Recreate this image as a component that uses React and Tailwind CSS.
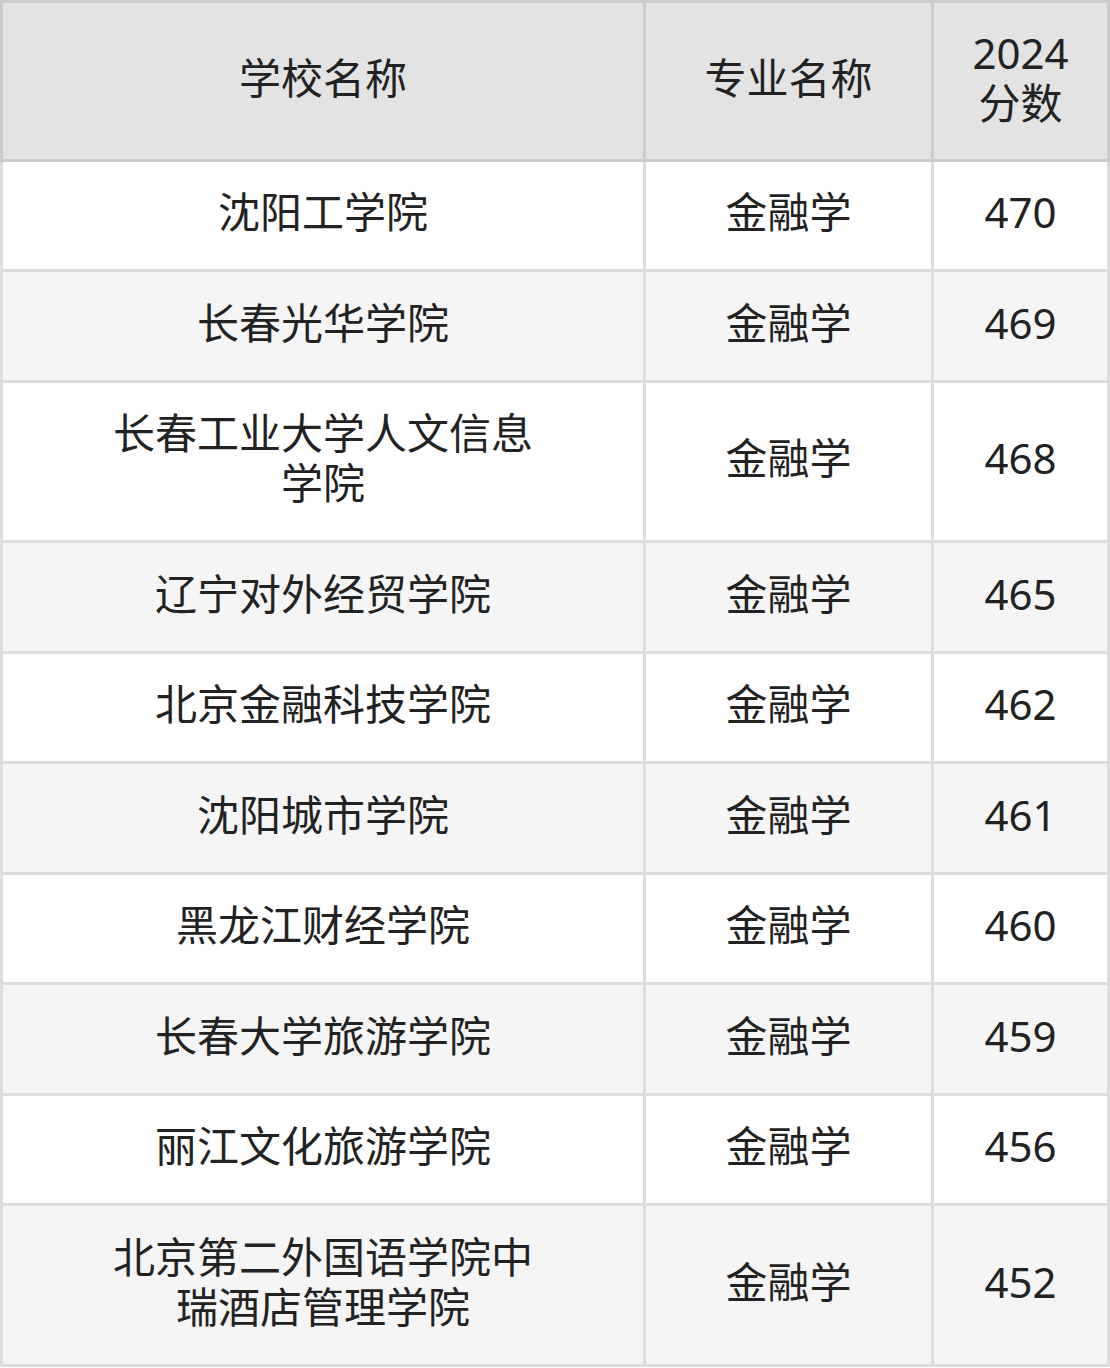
import React from 'react';

const rows = [
    { school: '沈阳工学院', major: '金融学', score: 470 },
    { school: '长春光华学院', major: '金融学', score: 469 },
    { school: '长春工业大学人文信息学院', major: '金融学', score: 468 },
    { school: '辽宁对外经贸学院', major: '金融学', score: 465 },
    { school: '北京金融科技学院', major: '金融学', score: 462 },
    { school: '沈阳城市学院', major: '金融学', score: 461 },
    { school: '黑龙江财经学院', major: '金融学', score: 460 },
    { school: '长春大学旅游学院', major: '金融学', score: 459 },
    { school: '丽江文化旅游学院', major: '金融学', score: 456 },
    { school: '北京第二外国语学院中瑞酒店管理学院', major: '金融学', score: 452 },
];

const App = () => {
    return (
        <div
            className="w-[1110px] bg-white text-[#222222]"
            style={{ fontFamily: '"Noto Sans", "Noto Sans CJK SC", sans-serif' }}
        >
            <table className="w-[1110px] table-fixed border-collapse text-[42px] leading-[50px]">
                <colgroup>
                    <col className="w-[643px]" />
                    <col className="w-[288px]" />
                    <col />
                </colgroup>
                <thead>
                    <tr className="bg-[#e3e3e3]">
                        <th className="border-[3px] border-[#cccccc] px-[100px] pt-[25px] pb-[30.5px] font-normal text-center">
                            学校名称
                        </th>
                        <th className="border-[3px] border-[#cccccc] px-[20px] pt-[25px] pb-[30.5px] font-normal text-center">
                            专业名称
                        </th>
                        <th className="border-[3px] border-[#cccccc] px-[20px] pt-[25px] pb-[30.5px] font-normal text-center">
                            2024分数
                        </th>
                    </tr>
                </thead>
                <tbody>
                    {rows.map((row, i) => (
                        <tr key={row.school} className={i % 2 === 0 ? 'bg-white' : 'bg-[#f5f5f5]'}>
                            <td className="border-[3px] border-[#dddddd] px-[100px] pt-[25.75px] pb-[31.75px] text-center">
                                {row.school}
                            </td>
                            <td className="border-[3px] border-[#dddddd] px-[20px] pt-[25.75px] pb-[31.75px] text-center">
                                {row.major}
                            </td>
                            <td className="border-[3px] border-[#dddddd] px-[20px] pt-[25.75px] pb-[31.75px] text-center">
                                {row.score}
                            </td>
                        </tr>
                    ))}
                </tbody>
            </table>
        </div>
    );
};

export default App;
